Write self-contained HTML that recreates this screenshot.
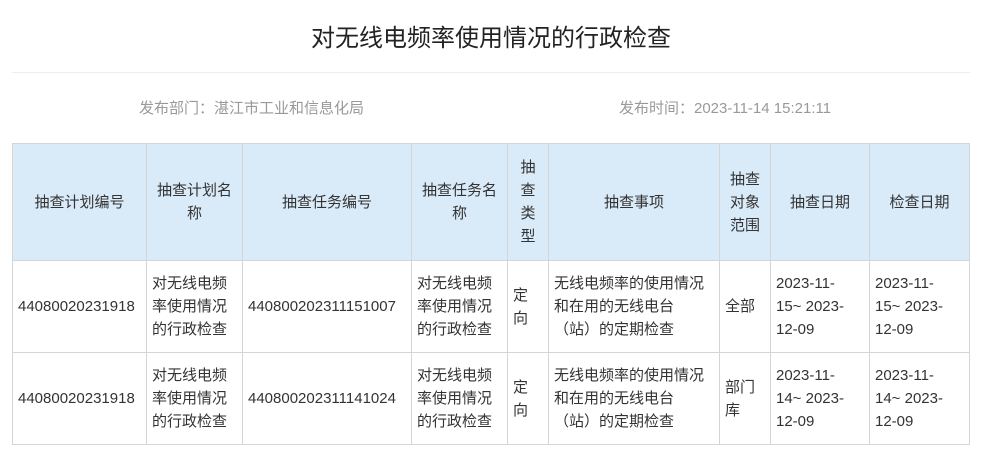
<!DOCTYPE html>
<html><head><meta charset="utf-8"><style>
body{margin:0;background:#fff;font-family:"Liberation Sans","Noto Sans CJK SC",sans-serif;color:#333;}
h1{position:absolute;left:0;width:982px;top:19px;margin:0;text-align:center;font-size:24px;font-weight:normal;color:#222;line-height:40px;}
.hr{position:absolute;left:12px;width:958px;top:72px;border-top:1px solid #eee;}
.m1{position:absolute;left:139px;top:99px;font-size:15px;color:#999;line-height:20px;}
.m2{position:absolute;left:619px;top:99px;font-size:15px;color:#999;line-height:20px;}
table{position:absolute;left:12px;top:143px;border-collapse:collapse;table-layout:fixed;font-size:15px;line-height:23px;}
td,th{border:1px solid #d5d5d5;padding:0 5px;vertical-align:middle;white-space:nowrap;}
th{background:#d9eaf8;font-weight:normal;text-align:center;height:116px;color:#333;}
td{height:91px;text-align:left;}
</style></head><body>
<h1>对无线电频率使用情况的行政检查</h1>
<div class="hr"></div>
<div class="m1">发布部门：湛江市工业和信息化局</div>
<div class="m2">发布时间：2023-11-14 15:21:11</div>
<table>
<colgroup><col style="width:134px"><col style="width:96px"><col style="width:169px"><col style="width:96px"><col style="width:41px"><col style="width:171px"><col style="width:51px"><col style="width:99px"><col style="width:100px"></colgroup>
<tr><th>抽查计划编号</th><th>抽查计划名<br>称</th><th>抽查任务编号</th><th>抽查任务名<br>称</th><th>抽<br>查<br>类<br>型</th><th>抽查事项</th><th>抽查<br>对象<br>范围</th><th>抽查日期</th><th>检查日期</th></tr>
<tr><td>44080020231918</td><td>对无线电频<br>率使用情况<br>的行政检查</td><td>44080020231115100​7</td><td>对无线电频<br>率使用情况<br>的行政检查</td><td>定<br>向</td><td>无线电频率的使用情况<br>和在用的无线电台<br>（站）的定期检查</td><td>全部</td><td>2023-11-<br>15~ 2023-<br>12-09</td><td>2023-11-<br>15~ 2023-<br>12-09</td></tr>
<tr><td>44080020231918</td><td>对无线电频<br>率使用情况<br>的行政检查</td><td>44080020231114102​4</td><td>对无线电频<br>率使用情况<br>的行政检查</td><td>定<br>向</td><td>无线电频率的使用情况<br>和在用的无线电台<br>（站）的定期检查</td><td>部门<br>库</td><td>2023-11-<br>14~ 2023-<br>12-09</td><td>2023-11-<br>14~ 2023-<br>12-09</td></tr>
</table>
</body></html>
